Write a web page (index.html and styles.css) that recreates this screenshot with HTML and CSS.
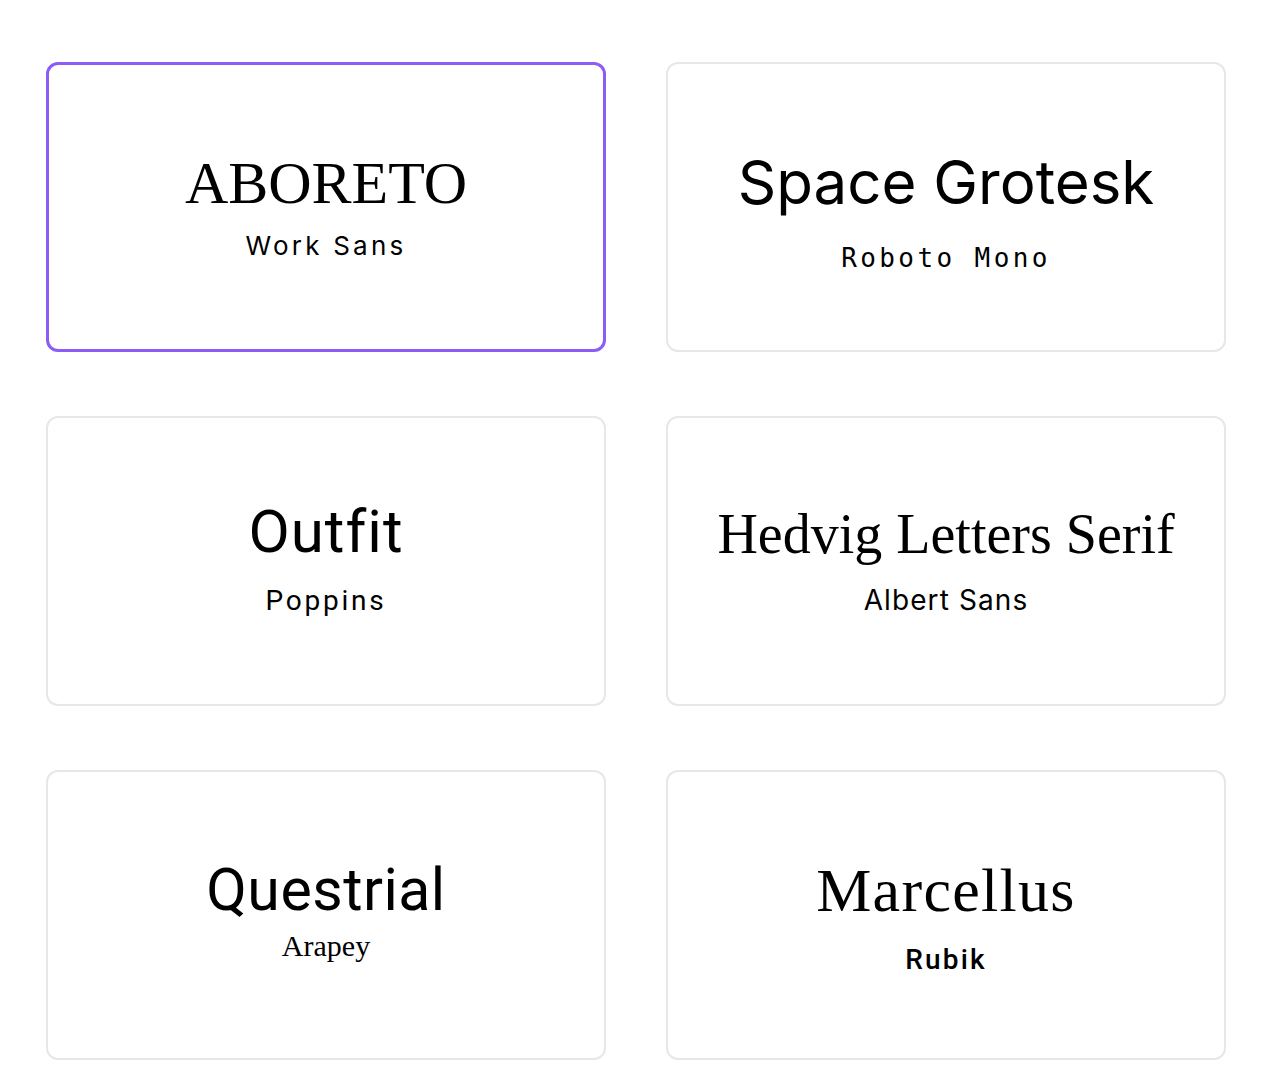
FILE: index.html
```html
<!DOCTYPE html>
<html lang="en">
<head>
<meta charset="utf-8">
<title>Font pairings</title>
<link rel="stylesheet" href="styles.css">
</head>
<body>
<main class="grid">
  <div class="card card--selected">
    <div class="title t-aboreto">ABORETO</div>
    <div class="sub s-worksans">Work Sans</div>
  </div>
  <div class="card">
    <div class="title t-space">Space Grotesk</div>
    <div class="sub s-mono">Roboto Mono</div>
  </div>
  <div class="card">
    <div class="title t-outfit">Outfit</div>
    <div class="sub s-poppins">Poppins</div>
  </div>
  <div class="card">
    <div class="title t-hedvig">Hedvig Letters Serif</div>
    <div class="sub s-albert">Albert Sans</div>
  </div>
  <div class="card">
    <div class="title t-questrial">Questrial</div>
    <div class="sub s-arapey">Arapey</div>
  </div>
  <div class="card">
    <div class="title t-marcellus">Marcellus</div>
    <div class="sub s-rubik">Rubik</div>
  </div>
</main>
</body>
</html>
```
FILE: styles.css
```css
* { box-sizing: border-box; }
html, body { margin: 0; background: #ffffff; }
body { color: #000; font-family: "Inter", "Liberation Sans", sans-serif; }

.grid {
  display: grid;
  grid-template-columns: 560px 560px;
  grid-auto-rows: 290px;
  column-gap: 60px;
  row-gap: 64px;
  padding: 62px 48px 16px 46px;
}

.card {
  border: 2px solid #e5e7eb;
  border-radius: 12px;
  display: flex;
  flex-direction: column;
  align-items: center;
  justify-content: center;
  text-align: center;
  background: #fff;
}
.card--selected { border: 3px solid #8b5cf6; }

.title { line-height: 1; white-space: nowrap; }
.sub { line-height: 1; white-space: nowrap; }

.t-aboreto { font-family: "Liberation Serif", serif; font-size: 60px; }
.s-worksans { font-family: "Inter", sans-serif; font-size: 26px; letter-spacing: 3.2px; margin: 20px 0 2px; }

.t-space { font-family: "Inter", sans-serif; font-size: 60px; }
.s-mono { font-family: "DejaVu Sans Mono", monospace; font-size: 26px; letter-spacing: 3.4px; margin: 33px 0 -9px; }

.t-outfit { font-family: "Roboto", sans-serif; font-weight: 400; font-size: 60px; letter-spacing: 1px; }
.s-poppins { font-family: "Roboto", sans-serif; font-size: 28px; letter-spacing: 2.8px; margin: 25px 0 6px; }

.t-hedvig { font-family: "Liberation Serif", serif; font-size: 56px; }
.s-albert { font-family: "Inter", sans-serif; font-size: 28px; letter-spacing: 1.1px; margin: 24px 0 2px; }

.t-questrial { font-family: "Roboto", sans-serif; font-size: 59px; letter-spacing: 0.5px; }
.s-arapey { font-family: "Liberation Serif", serif; font-size: 30px; margin: 12px 0 9px; }

.t-marcellus { font-family: "Liberation Serif", serif; font-size: 62px; letter-spacing: 1.3px; }
.s-rubik { font-family: "Roboto", sans-serif; font-weight: 500; font-size: 28px; letter-spacing: 2.2px; margin: 25px 0 -2px; }
```
